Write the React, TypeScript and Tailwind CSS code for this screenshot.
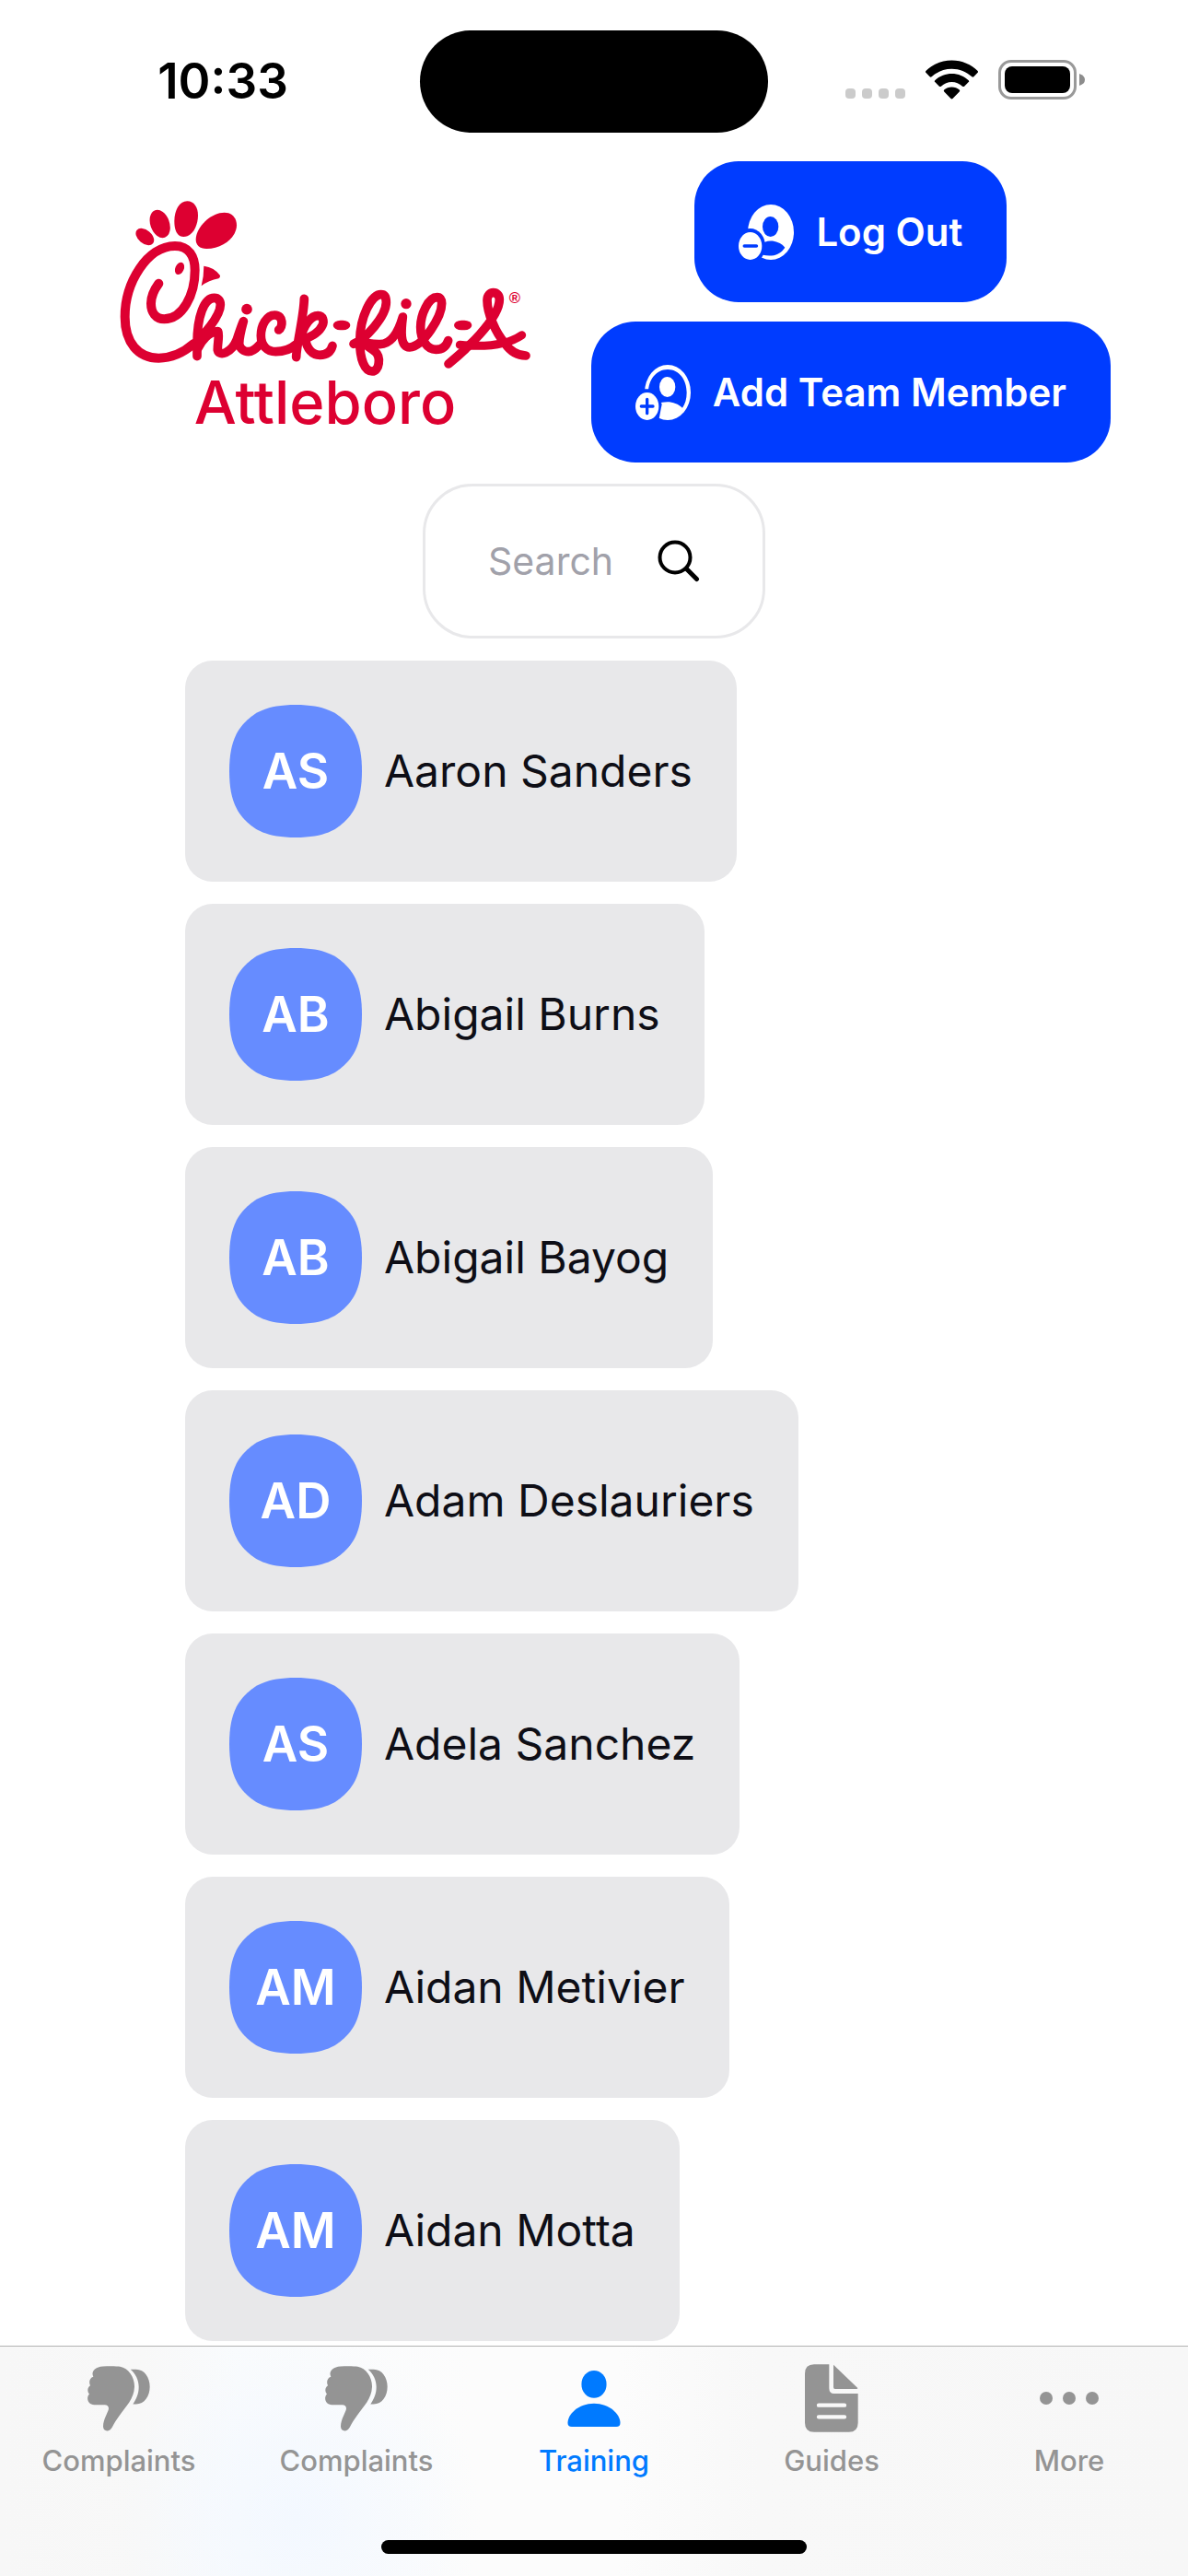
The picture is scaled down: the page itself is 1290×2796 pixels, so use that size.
import React from "react";

type Member = { initials: string; name: string };

const members: Member[] = [
  { initials: "AS", name: "Aaron Sanders" },
  { initials: "AB", name: "Abigail Burns" },
  { initials: "AB", name: "Abigail Bayog" },
  { initials: "AD", name: "Adam Deslauriers" },
  { initials: "AS", name: "Adela Sanchez" },
  { initials: "AM", name: "Aidan Metivier" },
  { initials: "AM", name: "Aidan Motta" },
];

function StatusBar() {
  return (
    <div className="grid h-[175px] grid-cols-[1fr_auto_1fr] items-start pt-[33px]">
      <time className="justify-self-center pt-[26px] pl-7 text-[53px] leading-[58px] font-semibold text-black">
        10:33
      </time>
      <div className="h-[111px] w-[378px] rounded-full bg-black" />
      <div className="flex items-end gap-[22px] justify-self-end pt-8 pr-[112px]">
        <div className="flex gap-[7px] pb-px">
          <span className="size-[11px] rounded bg-[#cbcbcb]" />
          <span className="size-[11px] rounded bg-[#cbcbcb]" />
          <span className="size-[11px] rounded bg-[#cbcbcb]" />
          <span className="size-[11px] rounded bg-[#cbcbcb]" />
        </div>
        <svg viewBox="0 0 172 127" className="h-[43px] w-[57px]" role="img" aria-label="Wi-Fi">
          <path d="M86 0C120 0 150 14 171 35q2 3 0 5L158 54q-3 3-6 0C134 37 111 28 86 28S38 37 20 54q-3 3-6 0L1 40q-2-2 0-5C22 14 52 0 86 0Z" />
          <path d="M86 44c21 0 41 8 55 22q3 3 0 5L127 85q-3 3-6 0C111 76 99 71 86 71S61 76 51 85q-3 3-6 0L31 71q-3-2 0-5C45 52 65 44 86 44Z" />
          <path d="M86 88c10 0 18 4 25 9q3 3 0 6L89 125q-3 3-6 0L61 103q-3-3 0-6c7-5 15-9 25-9Z" />
        </svg>
        <svg viewBox="0 0 94 43" className="h-[43px] w-[94px]" role="img" aria-label="Battery">
          <rect x="1.5" y="1.5" width="82" height="40" rx="12.5" fill="none" stroke="#999" strokeWidth="3" />
          <rect x="7" y="7" width="71" height="29" rx="8" fill="#000" />
          <path d="M88 15q6 2 6 6.500t-6 6.500Z" fill="#8c8c8c" />
        </svg>
      </div>
    </div>
  );
}

function Logo() {
  return (
    <div className="mt-[43px] flex w-[446px] flex-col items-center text-[#dd0031]">
      <svg viewBox="60 54 1338 570" className="h-[190px] w-[446px]" fill="currentColor" role="img" aria-label="Chick-fil-A">
        <ellipse cx="142" cy="171" rx="34" ry="22" transform="rotate(40 142 171)" />
        <ellipse cx="191" cy="129" rx="31" ry="47" transform="rotate(-20 191 129)" />
        <path d="M280 55C302 55 315 75 315 101C315 135 297 171 268 171C247 171 238 150 238 121C238 85 254 55 280 55Z" />
        <path d="M401 92C428 92 441 112 441 133C441 172 397 210 343 210C320 210 308 198 308 180C308 140 356 92 401 92Z" />
        <path d="M334 266Q368 270 387 297Q388 305 382 307Q350 313 326 331Q334 300 334 266Z" />
        <ellipse cx="255" cy="274" rx="14" ry="21" transform="rotate(24 255 274)" />
        <circle cx="474" cy="407" r="17.500" />
        <circle cx="993" cy="389" r="17" />
        <rect x="755" y="443" width="56" height="32" rx="24" ry="16" />
        <rect x="1149" y="443" width="58" height="32" rx="24" ry="16" />
        <g fill="none" stroke="currentColor" strokeLinecap="round" strokeLinejoin="round" strokeWidth="29">
          <path d="M187 323C170 346 162 365 162 388C162 418 178 439 205 439C265 439 305 360 305 280C305 235 285 201 240 201C150 201 77 320 77 432C77 515 120 566 187 566C232 566 268 548 300 520" strokeWidth="30" />
          <path d="M312 560L312 520C312 430 335 370 368 370C380 370 388 378 388 392C388 430 330 495 304 520" />
          <path d="M314 535C326 510 350 480 380 479C386 490 378 520 379 540C384 562 424 550 442 505C450 480 456 462 463 446C455 475 449 500 449 520C452 535 463 545 480 545C497 545 508 530 518 520" />
          <path d="M578 474C592 466 594 426 565 426C538 426 520 460 520 493C520 525 540 545 568 545C592 545 618 536 634 522" />
          <path d="M661 373C660 430 636 520 635 563" />
          <path d="M648 505C660 455 684 428 706 428C722 428 727 446 720 460C710 482 690 492 664 504C670 535 686 556 712 556C735 556 748 545 753 526" />
          <path d="M822 520C860 505 928 430 928 385C928 367 922 359 911 359C880 359 843 430 842 510C842 570 858 609 882 609C906 609 912 562 892 545C876 530 856 525 850 505C862 522 885 521 908 521C945 520 968 480 982 432C977 470 971 530 1004 531C1050 528 1109 430 1109 388C1109 374 1103 368 1094 368C1065 368 1040 425 1040 465C1040 505 1060 538 1090 538C1112 538 1124 527 1130 509" />
          <path d="M1131 585C1180 545 1297 440 1297 375C1297 361 1288 353 1277 353C1266 353 1257 362 1257 378C1257 420 1285 485 1315 518C1330 540 1350 557 1383 558" />
          <path d="M1168 523C1240 530 1320 525 1370 491" strokeWidth="27" />
        </g>
        <text x="1347" y="387" textAnchor="middle" fontSize="50" fontWeight="700" fontFamily="Liberation Sans, sans-serif">
          ®
        </text>
      </svg>
      <p className="text-[65px] leading-[58px] font-medium">Attleboro</p>
    </div>
  );
}

function LogOutIcon() {
  return (
    <svg viewBox="0 0 180 180" className="size-[60px] shrink-0" fill="none" aria-hidden="true">
      <ellipse cx="105" cy="90" rx="75" ry="90" fill="#fff" />
      <ellipse cx="104" cy="72" rx="26" ry="33" fill="#003cff" />
      <path d="M72 132C85 116 124 110 151 140C132 170 92 174 60 156Z" fill="#003cff" />
      <ellipse cx="38" cy="135" rx="49" ry="57" fill="#003cff" />
      <ellipse cx="38" cy="135" rx="38" ry="45" fill="#fff" />
      <path d="M19 135H58" stroke="#003cff" strokeWidth="11" strokeLinecap="round" />
    </svg>
  );
}

function AddMemberIcon() {
  return (
    <svg viewBox="0 0 180 180" className="size-[60px] shrink-0" fill="none" aria-hidden="true">
      <ellipse cx="105" cy="90" rx="75" ry="90" fill="#fff" />
      <path d="M105 15C142 15 167 48 167 90C167 111 162 128 153 140C140 128 122 121 104 121C92 121 82 123 70 129L42 90C42 48 68 15 105 15Z" fill="#003cff" />
      <ellipse cx="104" cy="72" rx="26" ry="33" fill="#fff" />
      <path d="M-10 79H62L86 128L76 180H-10Z" fill="#003cff" />
      <ellipse cx="38" cy="135" rx="38" ry="45" fill="#fff" />
      <path d="M19 135H57M38 112V158" stroke="#003cff" strokeWidth="10" strokeLinecap="round" />
    </svg>
  );
}

function ActionButton({ icon, children }: { icon: React.ReactNode; children: React.ReactNode }) {
  return (
    <button
      type="button"
      className="flex h-[153px] items-center gap-6 rounded-[48px] bg-[#003cff] px-12 text-[42px] leading-[48px] font-semibold whitespace-nowrap text-white"
    >
      {icon}
      <span>{children}</span>
    </button>
  );
}

function SearchBox() {
  return (
    <form
      role="search"
      className="mx-auto mt-[23px] flex h-[168px] w-[372px] items-center justify-between rounded-[54px] border-[3px] border-[#e8e8ea] px-[68px]"
    >
      <input
        type="search"
        aria-label="Search"
        placeholder="Search"
        className="w-40 bg-transparent text-[41px] leading-[48px] text-black outline-none placeholder:text-[#a1a1aa]"
      />
      <button type="submit" aria-label="Submit search" className="size-[46px]">
        <svg viewBox="0 0 46 46" className="size-[46px]" fill="none" stroke="#000" strokeLinecap="round">
          <circle cx="19" cy="19" r="16.500" strokeWidth="4" />
          <path d="M31.500 31.500L42.500 42.500" strokeWidth="5" />
        </svg>
      </button>
    </form>
  );
}

function MemberCard({ initials, name }: Member) {
  return (
    <li>
      <button type="button" className="flex items-center gap-6 rounded-[30px] bg-[#e8e8ea] p-12">
        <span className="grid size-36 place-items-center">
          <svg viewBox="0 0 144 144" className="col-start-1 row-start-1 size-36" fill="#668cff" aria-hidden="true">
            <path d="M72 0C104 0 117 9 126 18S144 40 144 72S135 117 126 126S104 144 72 144S27 135 18 126S0 104 0 72S9 27 18 18S40 0 72 0Z" />
          </svg>
          <span className="col-start-1 row-start-1 text-[53px] leading-[58px] font-semibold text-white">{initials}</span>
        </span>
        <span className="text-[48px] leading-[58px] whitespace-nowrap text-[#0e0e16]">{name}</span>
      </button>
    </li>
  );
}

function ThumbIcon() {
  return (
    <svg viewBox="0 0 204 212" className="h-[71px] w-[68px]" fill="currentColor" aria-hidden="true">
      <path d="M50 1C70 0 95 0 106 2C134 6 154 38 153 68C152 88 146 102 136 118C116 145 92 175 80 200C72 216 51 214 51 197C51 172 68 150 69 138C69 130 64 126 56 126H22C2 126 -6 104 6 91C-2 82 0 69 9 63C3 52 8 38 19 35C11 20 22 3 50 1Z" />
      <path d="M140 11H158C186 11 203 38 203 67C203 97 186 124 158 124H148C160 106 167 90 167 68C167 45 156 24 140 11Z" />
    </svg>
  );
}

function PersonIcon() {
  return (
    <svg viewBox="0 0 174 184" className="h-[61px] w-[58px]" fill="currentColor" aria-hidden="true">
      <ellipse cx="87" cy="45" rx="41" ry="45" />
      <path d="M87 108C138 108 173 144 173 171Q173 184 160 184H14Q1 184 1 171C1 144 36 108 87 108Z" />
    </svg>
  );
}

function GuideIcon() {
  return (
    <svg viewBox="0 0 174 222" className="h-[74px] w-[58px]" fill="currentColor" aria-hidden="true">
      <path d="M30 1H79V78Q79 96 95 96H173V191Q173 221 143 221H30Q0 221 0 191V31Q0 1 30 1Z" />
      <path d="M93 2L172 78Q172 81 168 81H98Q93 81 93 76Z" />
      <path d="M45 134H129M45 172H129" stroke="#f9f9f9" strokeWidth="13" strokeLinecap="round" />
    </svg>
  );
}

function MoreIcon() {
  return (
    <svg viewBox="0 0 64 14" className="h-[14px] w-[64px]" fill="currentColor" aria-hidden="true">
      <circle cx="7" cy="7" r="7" />
      <circle cx="32" cy="7" r="7" />
      <circle cx="57" cy="7" r="7" />
    </svg>
  );
}

const tabs = [
  { label: "Complaints", icon: <ThumbIcon />, active: false },
  { label: "Complaints", icon: <ThumbIcon />, active: false },
  { label: "Training", icon: <PersonIcon />, active: true },
  { label: "Guides", icon: <GuideIcon />, active: false },
  { label: "More", icon: <MoreIcon />, active: false },
];

function TabBar() {
  return (
    <nav className="sticky bottom-0 border-t border-[#b2b2b2] bg-[#fafafa] bg-[radial-gradient(circle_at_25%_75%,#f3f8ff_0,#f3f8ff00_200px),linear-gradient(to_right,#f7f7f7_0%,#f8f8f8_12%,#f9fbfd_20%,#fcfcfc_40%,#fcfcfc_52%,#f8f8f8_64%,#f7f7f7_100%)]">
      <div className="grid h-[210px] grid-cols-5">
        {tabs.map((tab, i) => (
          <a
            key={i}
            href="#"
            aria-current={tab.active ? "page" : undefined}
            className={`flex flex-col items-center pt-[18px] text-[31px] leading-[36px] font-medium ${
              tab.active ? "text-[#007aff]" : "text-[#949494]"
            }`}
          >
            <span className="flex h-[76px] items-center">{tab.icon}</span>
            <span className="mt-3">{tab.label}</span>
          </a>
        ))}
      </div>
      <div className="mx-auto mb-6 h-[15px] w-[462px] rounded-full bg-black" />
    </nav>
  );
}

export default function App() {
  return (
    <div className="flex min-h-screen flex-col bg-white font-['Inter','Liberation_Sans',sans-serif]">
      <StatusBar />
      <main className="flex-1">
        <header className="flex items-start justify-between pr-[84px] pl-[130px]">
          <Logo />
          <div className="flex flex-col items-center gap-[21px]">
            <ActionButton icon={<LogOutIcon />}>Log Out</ActionButton>
            <ActionButton icon={<AddMemberIcon />}>Add Team Member</ActionButton>
          </div>
        </header>
        <SearchBox />
        <ul className="mt-6 flex flex-col items-start gap-6 pl-[201px]">
          {members.map((member) => (
            <MemberCard key={member.name} {...member} />
          ))}
        </ul>
      </main>
      <TabBar />
    </div>
  );
}
